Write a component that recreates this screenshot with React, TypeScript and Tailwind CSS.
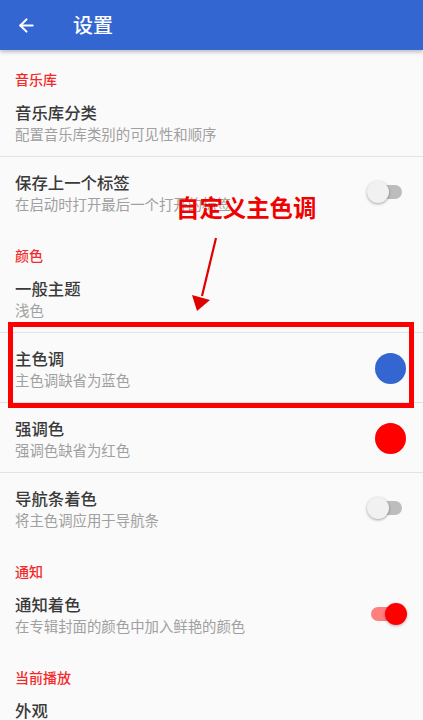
import { ArrowLeft } from "lucide-react";

type Row = {
  title: string;
  sub?: string;
  control?: "off" | "on" | "blue" | "red";
  divider?: boolean;
};

type Section = { label: string; rows: Row[] };

const sections: Section[] = [
  {
    label: "音乐库",
    rows: [
      { title: "音乐库分类", sub: "配置音乐库类别的可见性和顺序", divider: true },
      { title: "保存上一个标签", sub: "在启动时打开最后一个打开的标签", control: "off" },
    ],
  },
  {
    label: "颜色",
    rows: [
      { title: "一般主题", sub: "浅色", divider: true },
      { title: "主色调", sub: "主色调缺省为蓝色", control: "blue", divider: true },
      { title: "强调色", sub: "强调色缺省为红色", control: "red", divider: true },
      { title: "导航条着色", sub: "将主色调应用于导航条", control: "off" },
    ],
  },
  {
    label: "通知",
    rows: [{ title: "通知着色", sub: "在专辑封面的颜色中加入鲜艳的颜色", control: "on" }],
  },
  {
    label: "当前播放",
    rows: [{ title: "外观" }],
  },
];

function Control({ kind }: { kind: Row["control"] }) {
  if (kind === "blue") return <div className="ml-[2px] h-[31px] w-[31px] rounded-full bg-[#3366d1]" />;
  if (kind === "red") return <div className="ml-[2px] h-[31px] w-[31px] rounded-full bg-[#ff0000]" />;
  if (kind === "off")
    return (
      <div className="relative mr-[7px] flex h-[22px] w-[38px] items-center">
        <div className="ml-[8px] h-[14px] w-[27px] rounded-full bg-[#bdbdbd]" />
        <div className="absolute left-0 top-0 h-[22px] w-[22px] rounded-full bg-[#f1f1f1] shadow-[0_1px_3px_rgba(0,0,0,0.35)]" />
      </div>
    );
  if (kind === "on")
    return (
      <div className="relative mr-[3px] flex h-[22px] w-[38px] items-center">
        <div className="ml-[2px] h-[14px] w-[28px] rounded-full bg-[#ff7f7f]" />
        <div className="absolute right-0 top-0 h-[22px] w-[22px] rounded-full bg-[#ff0000] shadow-[0_1px_3px_rgba(0,0,0,0.3)]" />
      </div>
    );
  return null;
}

export default function App() {
  return (
    <div
      className="relative h-[720px] w-[423px] overflow-hidden bg-[#fafafa]"
      style={{ fontFamily: '"Noto Sans CJK SC", "Noto Sans", sans-serif' }}
    >
      {/* 顶栏 */}
      <div className="relative z-10 flex h-[50px] items-center bg-[#3366d1] shadow-[0_2px_4px_rgba(0,0,0,0.25)]">
        <ArrowLeft className="ml-[16px] h-[21px] w-[21px] text-white" strokeWidth={2.4} />
        <span className="ml-[36px] text-[20px] font-medium leading-none text-white">设置</span>
      </div>

      {sections.map((sec) => (
        <div key={sec.label}>
          <div className="pl-[15px] pt-[21px] text-[14px] font-medium leading-[16px] text-[#f42a2a]">
            {sec.label}
          </div>
          {sec.rows.map((row) => (
            <div key={row.title} className={row.divider ? "border-b border-[#e3e3e3]" : ""}>
              <div className="flex items-center pb-[13px] pl-[15px] pr-[12px] pt-[14px]">
                <div className="flex-1">
                  <div className="text-[16.4px] font-medium leading-[22px] text-[#3a3a3a]">{row.title}</div>
                  {row.sub && (
                    <div className="mt-[2px] text-[14.4px] leading-[18px] text-[#a0a0a0]">{row.sub}</div>
                  )}
                </div>
                <div className="flex w-[44px] justify-center">
                  <Control kind={row.control} />
                </div>
              </div>
            </div>
          ))}
        </div>
      ))}

      {/* 标注 */}
      <div className="pointer-events-none absolute left-[8px] top-[322px] h-[86px] w-[406px] border-[5px] border-[#ff0000]" />
      <div className="absolute left-[176px] top-[193px] text-[23.4px] font-bold leading-[28px] text-[#f00000]">
        自定义主色调
      </div>
      <svg className="absolute left-0 top-0" width="423" height="720" viewBox="0 0 423 720">
        <line x1="216" y1="238" x2="202" y2="296" stroke="#e00000" strokeWidth="2.2" />
        <polygon points="192,295 210,300 197,311" fill="#e00000" />
      </svg>
    </div>
  );
}
